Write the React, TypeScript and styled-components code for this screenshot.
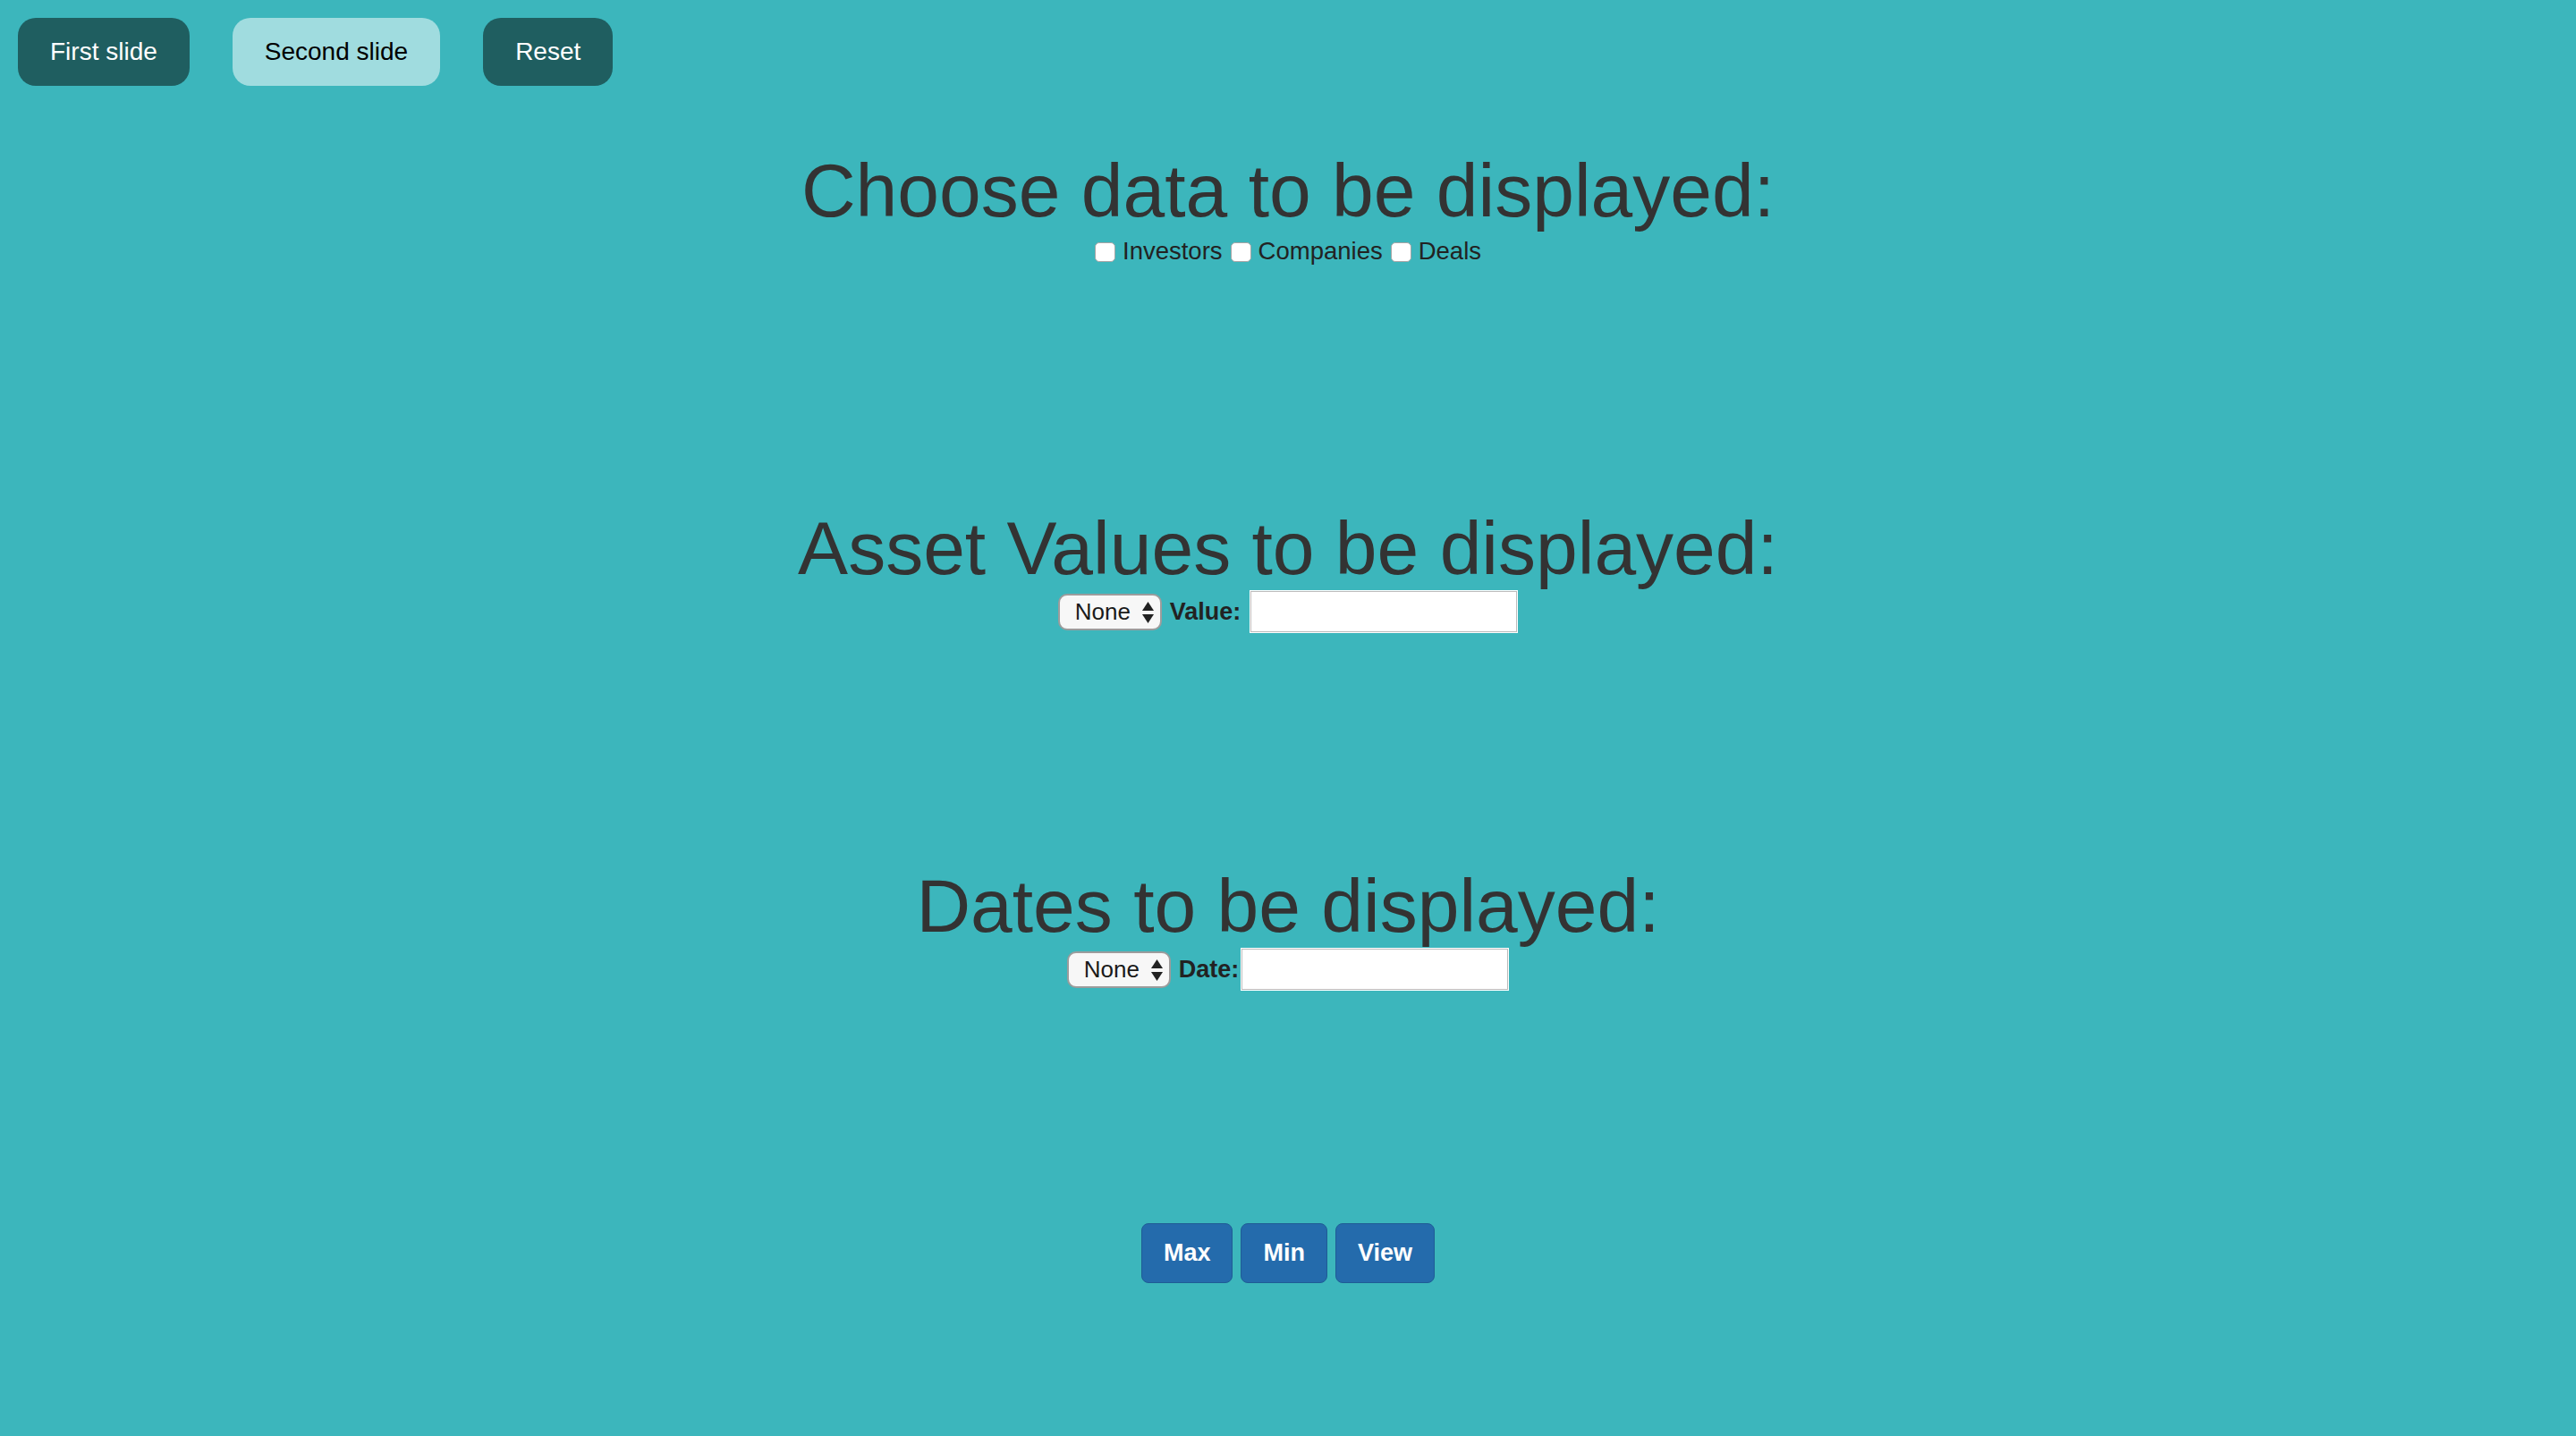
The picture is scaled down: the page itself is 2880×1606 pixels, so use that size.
import React from "react";
import styled, { createGlobalStyle } from "styled-components";

const GlobalStyle = createGlobalStyle`
  html, body {
    margin: 0;
    padding: 0;
    background: #3cb6bc;
    font-family: "Liberation Sans", Arial, Helvetica, sans-serif;
  }
  body {
    min-height: 1606px;
  }
`;

const Page = styled.div`
  min-height: 1606px;
  background: #3cb6bc;
`;

const TopBar = styled.div`
  display: flex;
  gap: 48px;
  padding: 20px 20px 0;
`;

const SlideButton = styled.button<{ $light?: boolean }>`
  height: 76px;
  padding: 0 36px;
  border: none;
  border-radius: 20px;
  font-family: "Liberation Sans", Arial, Helvetica, sans-serif;
  font-size: 28px;
  background: ${(p) => (p.$light ? "#a0dcdf" : "#1f5e60")};
  color: ${(p) => (p.$light ? "#000" : "#fff")};
  cursor: pointer;
`;

const Main = styled.main`
  margin-top: 70px;
`;

const Section = styled.section`
  height: 400px;
  text-align: center;
`;

const Heading = styled.h1`
  margin: 0;
  font-size: 84px;
  line-height: 94px;
  font-weight: normal;
  color: #333;
`;

const CheckRow = styled.div`
  margin-top: 5px;
  display: flex;
  justify-content: center;
  align-items: center;
  gap: 9px;
`;

const Option = styled.label`
  display: inline-flex;
  align-items: center;
  gap: 8px;
  font-size: 27.5px;
  color: #222;
`;

const Checkbox = styled.input`
  appearance: none;
  margin: 2px 0 0;
  width: 23px;
  height: 22px;
  background: #fff;
  border: 1px solid #a5a5a5;
  border-radius: 5px;
  box-sizing: border-box;
`;

const ControlRow = styled.div`
  display: flex;
  justify-content: center;
  align-items: center;
  height: 48px;
`;

const SelectWrap = styled.div`
  position: relative;
  width: 116px;
  height: 41px;
`;

const Select = styled.select`
  appearance: none;
  width: 100%;
  height: 100%;
  box-sizing: border-box;
  margin: 0;
  padding: 0 0 0 17px;
  border: 2px solid #9c9c9c;
  border-radius: 10px;
  background: #f7f7f7;
  font-family: "Liberation Sans", Arial, Helvetica, sans-serif;
  font-size: 26px;
  color: #1a1a1a;
`;

const Arrows = styled.svg`
  position: absolute;
  right: 9px;
  top: 9px;
  pointer-events: none;
`;

const FieldLabel = styled.label<{ $after: number }>`
  margin: 0 ${(p) => p.$after}px 0 9px;
  font-size: 27px;
  font-weight: bold;
  color: #222;
`;

const TextInput = styled.input`
  width: 300px;
  height: 48px;
  box-sizing: border-box;
  margin: 0;
  border: 1px solid #fff;
  box-shadow: inset 0 0 0 1px #bcbcbc;
  background: #fff;
  font-size: 26px;
`;

const ButtonBar = styled.div`
  margin-top: 2px;
  display: flex;
  justify-content: center;
  gap: 9px;
`;

const ActionButton = styled.button`
  height: 67px;
  padding: 0 24px;
  border: 1px solid #1f5c95;
  border-radius: 8px;
  background: #246bac;
  color: #fff;
  font-family: "Liberation Sans", Arial, Helvetica, sans-serif;
  font-size: 27px;
  font-weight: bold;
  cursor: pointer;
`;

const UpDown = () => (
  <Arrows width="13" height="24" viewBox="0 0 13 24">
    <polygon points="6.5,0 13,10 0,10" fill="#222" />
    <polygon points="0,14 13,14 6.5,24" fill="#222" />
  </Arrows>
);

const Dropdown = ({ id }: { id: string }) => (
  <SelectWrap>
    <Select id={id} defaultValue="none">
      <option value="none">None</option>
      <option value="max">Max</option>
      <option value="min">Min</option>
    </Select>
    <UpDown />
  </SelectWrap>
);

export default function App() {
  return (
    <Page>
      <GlobalStyle />
      <TopBar>
        <SlideButton>First slide</SlideButton>
        <SlideButton $light>Second slide</SlideButton>
        <SlideButton>Reset</SlideButton>
      </TopBar>
      <Main>
        <Section>
          <Heading>Choose data to be displayed:</Heading>
          <CheckRow>
            {["Investors", "Companies", "Deals"].map((name) => (
              <Option key={name}>
                <Checkbox type="checkbox" />
                {name}
              </Option>
            ))}
          </CheckRow>
        </Section>
        <Section>
          <Heading>Asset Values to be displayed:</Heading>
          <ControlRow>
            <Dropdown id="value-select" />
            <FieldLabel $after={10} htmlFor="value-input">
              Value:
            </FieldLabel>
            <TextInput id="value-input" type="text" />
          </ControlRow>
        </Section>
        <Section>
          <Heading>Dates to be displayed:</Heading>
          <ControlRow>
            <Dropdown id="date-select" />
            <FieldLabel $after={2} htmlFor="date-input">
              Date:
            </FieldLabel>
            <TextInput id="date-input" type="text" />
          </ControlRow>
        </Section>
      </Main>
      <ButtonBar>
        <ActionButton>Max</ActionButton>
        <ActionButton>Min</ActionButton>
        <ActionButton>View</ActionButton>
      </ButtonBar>
    </Page>
  );
}
